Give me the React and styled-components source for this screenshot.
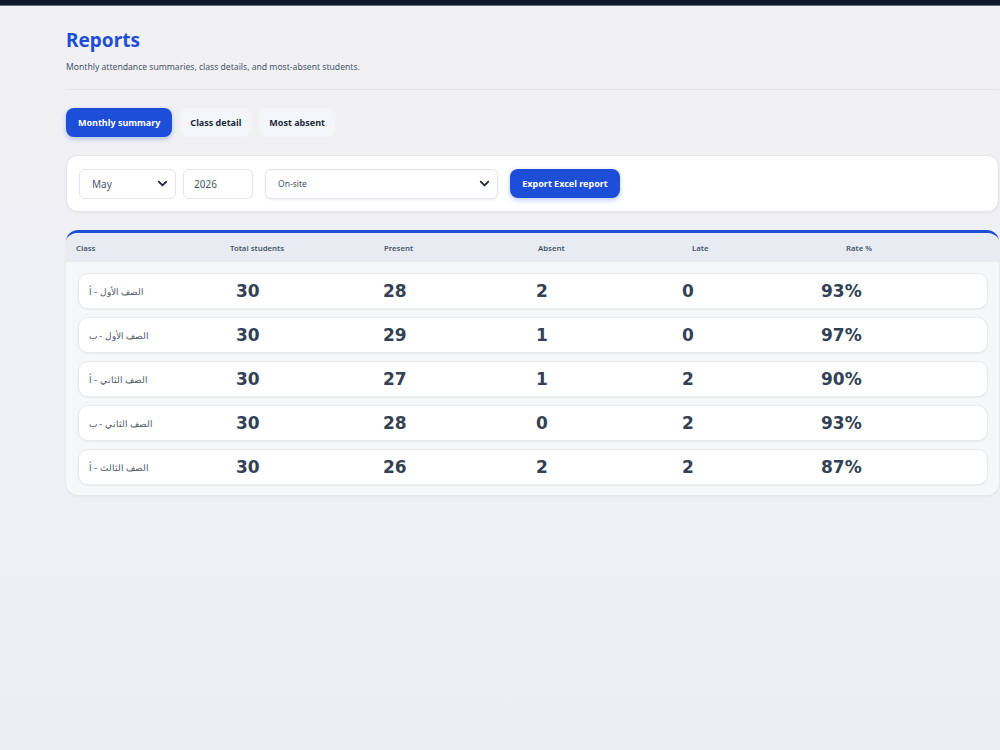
import React, { useState } from "react";
import styled, { createGlobalStyle } from "styled-components";
import { ChevronDown } from "lucide-react";

const GlobalStyle = createGlobalStyle`
  html, body {
    margin: 0;
    padding: 0;
  }
  body {
    background: linear-gradient(180deg, #f1f0f3 0%, #eff1f5 60%, #eceef2 100%);
    min-height: 750px;
    font-family: "Noto Sans", "Noto Sans CJK SC", sans-serif;
    color: #334155;
  }
`;

const rows = [
  { name: "الصف الأول - أ", total: 30, present: 28, absent: 2, late: 0, rate: 93 },
  { name: "الصف الأول - ب", total: 30, present: 29, absent: 1, late: 0, rate: 97 },
  { name: "الصف الثاني - أ", total: 30, present: 27, absent: 1, late: 2, rate: 90 },
  { name: "الصف الثاني - ب", total: 30, present: 28, absent: 0, late: 2, rate: 93 },
  { name: "الصف الثالث - أ", total: 30, present: 26, absent: 2, late: 2, rate: 87 },
];

const tabs = ["Monthly summary", "Class detail", "Most absent"];
const headers = ["Class", "Total students", "Present", "Absent", "Late", "Rate %"];

const App = () => {
  const [tab, setTab] = useState(0);

  return (
    <Page>
      <GlobalStyle />
      <TopBar />
      <Main>
        <Title>Reports</Title>
        <Subtitle>Monthly attendance summaries, class details, and most-absent students.</Subtitle>
        <Divider />

        <Tabs>
          {tabs.map((t, i) => (
            <Tab key={t} $active={tab === i} onClick={() => setTab(i)}>
              {t}
            </Tab>
          ))}
        </Tabs>

        <FilterCard>
          <SelectBox $width={97}>
            <span>May</span>
            <ChevronDown size={15} strokeWidth={3} color="#1e293b" />
          </SelectBox>
          <YearBox>2026</YearBox>
          <SelectBox $width={233} $small $gap={12}>
            <span>On-site</span>
            <ChevronDown size={15} strokeWidth={3} color="#1e293b" />
          </SelectBox>
          <ExportButton>Export Excel report</ExportButton>
        </FilterCard>

        <TableCard>
          <HeaderRow>
            {headers.map((h) => (
              <HeaderCell key={h}>{h}</HeaderCell>
            ))}
          </HeaderRow>
          <Body>
            {rows.map((r) => (
              <Row key={r.name}>
                <ClassName>{r.name}</ClassName>
                <Num>{r.total}</Num>
                <Num>{r.present}</Num>
                <Num>{r.absent}</Num>
                <Num>{r.late}</Num>
                <Num>{r.rate}%</Num>
              </Row>
            ))}
          </Body>
        </TableCard>
      </Main>
    </Page>
  );
};

const Page = styled.div`
  min-height: 750px;
`;

const TopBar = styled.div`
  height: 5px;
  background: #0f172a;
  border-bottom: 1px solid #6b7280;
`;

const Main = styled.main`
  padding: 22px 1px 0 66px;
`;

const Title = styled.h1`
  margin: 0;
  font-size: 19px;
  line-height: 24px;
  font-weight: 700;
  color: #1d4ed8;
`;

const Subtitle = styled.p`
  margin: 9px 0 0;
  font-size: 8.6px;
  line-height: 12px;
  color: #475569;
`;

const Divider = styled.div`
  height: 1px;
  background: #e3e5ea;
  margin-top: 16px;
`;

const Tabs = styled.div`
  display: flex;
  gap: 8px;
  margin-top: 18px;
`;

const Tab = styled.button`
  height: 29px;
  padding: 0 ${(p) => (p.$active ? "12px" : "10px")};
  border: none;
  border-radius: 8px;
  font-family: "Noto Sans", sans-serif;
  font-size: 9px;
  font-weight: 700;
  cursor: pointer;
  background: ${(p) => (p.$active ? "#1d4ed8" : "#f3f5f9")};
  color: ${(p) => (p.$active ? "#ffffff" : "#1e293b")};
  box-shadow: ${(p) => (p.$active ? "0 2px 5px rgba(29, 78, 216, 0.3)" : "none")};
`;

const FilterCard = styled.div`
  margin-top: 18px;
  height: 57px;
  box-sizing: border-box;
  display: flex;
  align-items: center;
  padding: 0 12px;
  background: #ffffff;
  border: 1px solid #e2e6ec;
  border-radius: 12px;
  box-shadow: 0 1px 3px rgba(15, 23, 42, 0.05);
`;

const SelectBox = styled.div`
  width: ${(p) => p.$width}px;
  height: 30px;
  box-sizing: border-box;
  margin-left: ${(p) => (p.$gap ? p.$gap : 0)}px;
  display: flex;
  align-items: center;
  justify-content: space-between;
  padding: 0 5px 0 12px;
  background: #ffffff;
  border: 1px solid #e2e6ec;
  border-radius: 6px;
  box-shadow: ${(p) => (p.$small ? "0 1px 2px rgba(15, 23, 42, 0.08)" : "none")};
  font-size: ${(p) => (p.$small ? "8.5px" : "10px")};
  color: #475569;
`;

const YearBox = styled.div`
  width: 70px;
  height: 30px;
  box-sizing: border-box;
  margin-left: 7px;
  display: flex;
  align-items: center;
  padding: 0 10px;
  border: 1px solid #e2e6ec;
  border-radius: 6px;
  font-size: 10px;
  color: #475569;
`;

const ExportButton = styled.button`
  margin-left: 12px;
  width: 110px;
  height: 29px;
  border: none;
  border-radius: 8px;
  background: #1d4ed8;
  color: #ffffff;
  font-family: "Noto Sans", sans-serif;
  font-size: 9px;
  font-weight: 700;
  box-shadow: 0 2px 5px rgba(29, 78, 216, 0.3);
`;

const TableCard = styled.section`
  margin-top: 18px;
  background: #f6f7f9;
  border-top: 3px solid #1d4ed8;
  border-radius: 12px;
  box-shadow: 0 1px 3px rgba(15, 23, 42, 0.08);
  overflow: hidden;
`;

const HeaderRow = styled.div`
  display: grid;
  grid-template-columns: repeat(6, 154px);
  align-items: center;
  height: 29px;
  padding-left: 10px;
  background: #e8ecf2;
`;

const HeaderCell = styled.div`
  font-size: 7.8px;
  font-weight: 600;
  color: #475569;
`;

const Body = styled.div`
  display: flex;
  flex-direction: column;
  gap: 8px;
  padding: 11px 11px 10px 12px;
`;

const Row = styled.div`
  display: grid;
  grid-template-columns: 147px 147px 153px 146px 139px 1fr;
  align-items: center;
  height: 36px;
  box-sizing: border-box;
  padding-left: 10px;
  background: #ffffff;
  border: 1px solid #e6e9ee;
  border-radius: 10px;
  box-shadow: 0 1px 2px rgba(15, 23, 42, 0.06);
`;

const ClassName = styled.div`
  font-size: 9px;
  color: #4b5563;
`;

const Num = styled.div`
  font-family: "DejaVu Sans", sans-serif;
  font-size: 17px;
  font-weight: 700;
  color: #334155;
`;

export default App;
